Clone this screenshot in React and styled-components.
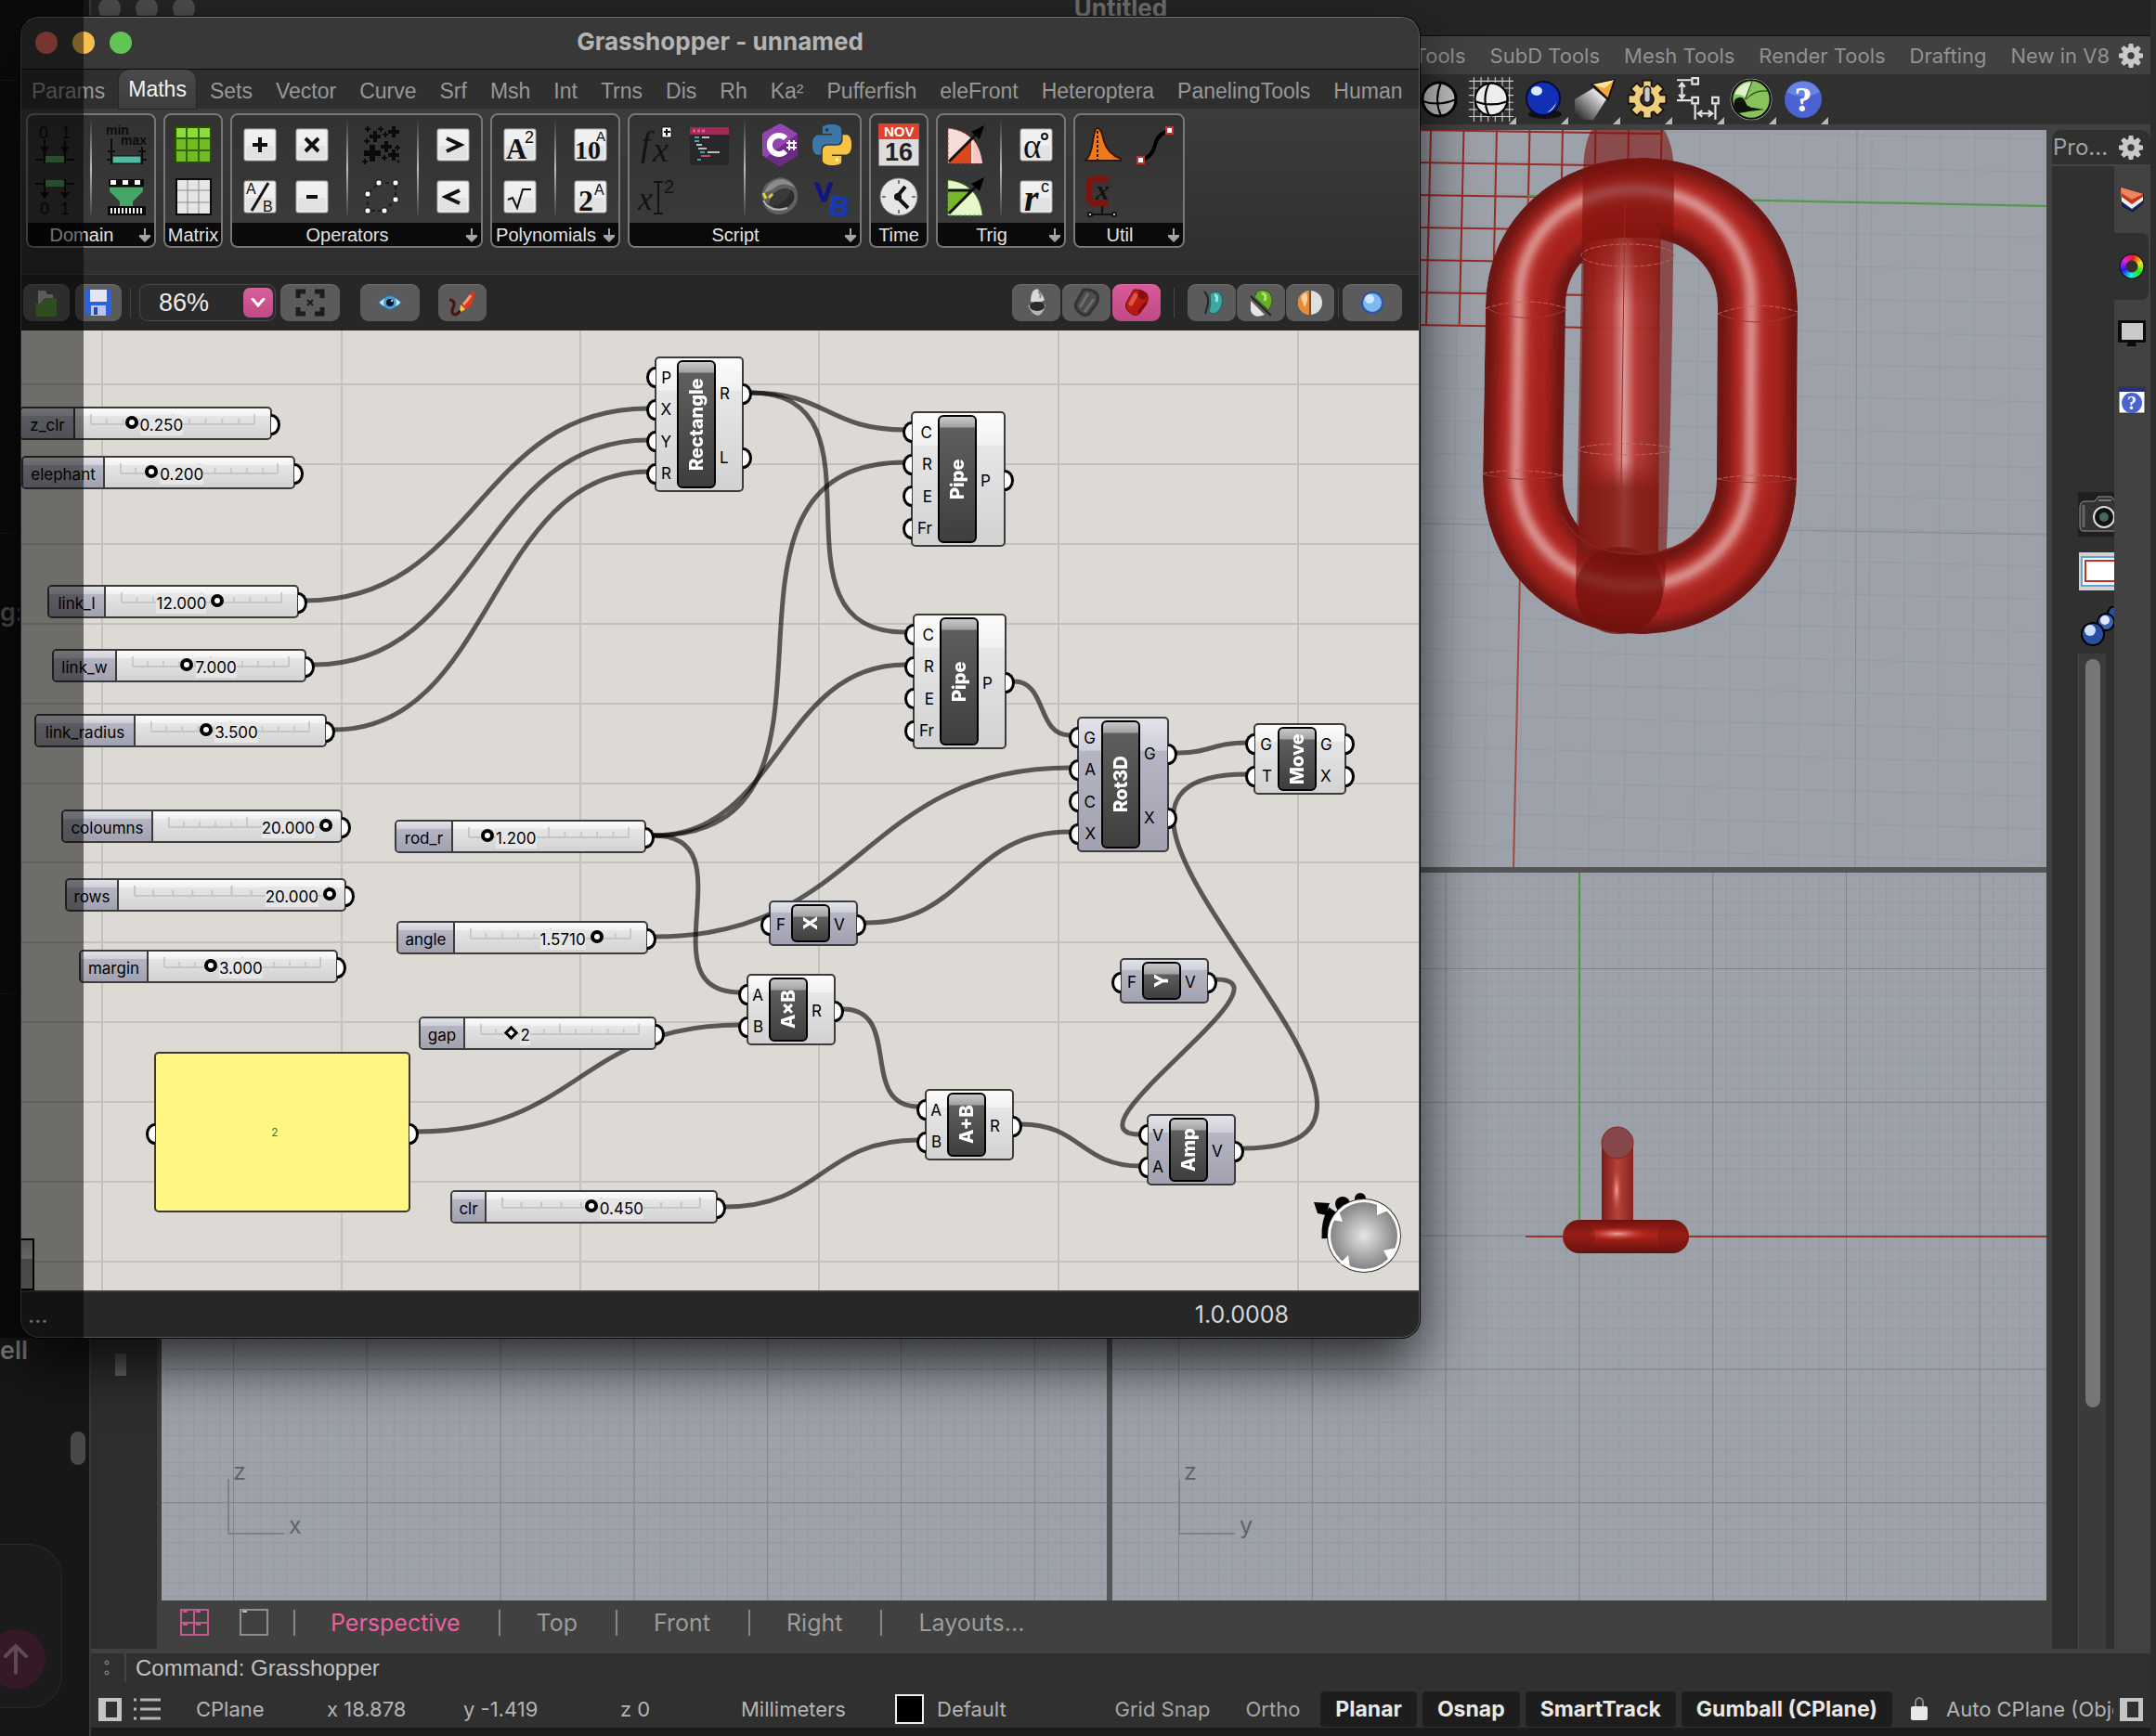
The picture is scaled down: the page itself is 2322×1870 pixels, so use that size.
import React from "react";
import styled, { createGlobalStyle, css } from "styled-components";

const UI = `Inter, "Noto Sans", sans-serif`;
const HELV = `"Liberation Sans", Arial, sans-serif`;

const GlobalStyle = createGlobalStyle`
  * { box-sizing: border-box; }
  body { margin: 0; background: #151515; font-family: ${UI}; overflow: hidden; }
  button, select, input { font: inherit; color: inherit; margin: 0; }
  button { padding: 0; border: none; background: none; }
  svg { display: block; }
`;

const Desktop = styled.div`
  position: relative;
  height: 100vh;
  overflow: hidden;
`;

/* ---------- chat window at the back ---------- */

const ChatWindow = styled.aside`
  position: absolute;
  inset: 0 auto 0 0;
  width: 98px;
  display: flex;
  flex-direction: column;
  background: #171717;
  border-right: 2px solid #3a3a3a;
  color: #7c7c7c;
  font-size: 27px;
  line-height: 32px;
`;

const ChatBlock = styled.div`
  height: ${(p) => p.$h}px;
  flex: none;
  padding-top: ${(p) => p.$pad || 0}px;
  border-bottom: 1px solid #2e2e2e;
  color: #9c9c9c;
  font-weight: 600;
`;

const ChatTail = styled.div`
  flex: 1;
  padding-top: 368px;
  display: flex;
  flex-direction: column;
  font-weight: 600;
`;

const ChatThumb = styled.div`
  width: 16px;
  height: 36px;
  margin: 71px 4px 85px auto;
  flex: none;
  border-radius: 8px;
  background: #484848;
`;

const ChatInput = styled.div`
  width: 67px;
  height: 177px;
  flex: none;
  display: flex;
  align-items: flex-end;
  padding-bottom: 20px;
  border: 1px solid #2a2a2a;
  border-left: none;
  border-radius: 0 36px 36px 0;
  background: #1b1b1b;
`;

const SendButton = styled.button`
  width: 64px;
  height: 64px;
  margin-left: -15px;
  flex: none;
  border-radius: 50%;
  background: #351926;
  display: grid;
  place-items: center;
`;

const Dimmer = styled.div`
  position: absolute;
  left: 0;
  top: 0;
  width: 90px;
  height: 1441px;
  background: rgba(0, 0, 0, 0.5);
  pointer-events: none;
`;

/* ---------- Rhino window ---------- */

const RhinoWindow = styled.main`
  position: absolute;
  inset: 0 0 0 98px;
  display: flex;
  flex-direction: column;
  background: #414141;
  border-right: 6px solid #2d2d2d;
  color: #b9b9b9;
`;

const RhinoTitle = styled.header`
  height: 39px;
  flex: none;
  position: relative;
  display: flex;
  justify-content: center;
  background: #252525;
  border-bottom: 1px solid #0c0c0c;
  color: #6e6e6e;
  font-size: 26px;
  font-weight: 700;
  line-height: 18px;
`;

const Lights = styled.div`
  position: absolute;
  left: ${(p) => p.$x}px;
  top: ${(p) => p.$y}px;
  display: flex;
  gap: 16px;
`;

const Light = styled.button`
  width: 24px;
  height: 24px;
  border-radius: 50%;
  background: ${(p) => p.$color};
`;

const RhinoMenu = styled.nav`
  height: 41px;
  flex: none;
  display: flex;
  justify-content: flex-end;
  align-items: center;
  gap: 26px;
  padding-right: 8px;
  color: #919191;
  font-size: 22px;
`;

const GearButton = styled.button`
  width: 26px;
  height: 26px;
  margin-left: -16px;
`;

const RhinoTools = styled.div`
  height: 54px;
  flex: none;
  display: flex;
  justify-content: flex-end;
  padding-right: 346px;
  background: #303030;
`;

const ToolButton = styled.button`
  position: relative;
  width: 56px;
  height: 54px;
  display: grid;
  place-items: center;

  &::after {
    content: "";
    position: absolute;
    right: 1px;
    bottom: 0;
    border: 4px solid transparent;
    border-right-color: #b8b8b8;
    border-bottom-color: #b8b8b8;
    display: ${(p) => (p.$menu ? "block" : "none")};
  }
`;

const RhinoBody = styled.div`
  flex: 1;
  min-height: 0;
  display: flex;
`;

const LeftColumn = styled.div`
  width: 71px;
  flex: none;
  margin-bottom: 5px;
  padding: 1324px 0 0 26px;
  background: #2e2e2e;
`;

const LeftHandle = styled.div`
  width: 12px;
  height: 24px;
  background: linear-gradient(#4a4a4a, #6a6a6a);
`;

const Center = styled.section`
  flex: 1;
  min-width: 0;
  display: flex;
  flex-direction: column;
  padding: 6px 6px 0 5px;
`;

const Viewports = styled.div`
  flex: 1;
  min-height: 0;
  display: grid;
  grid-template: 794fr 784fr / 1018fr 1006fr;
  gap: 6px;
  background: #555657;

  svg {
    width: 100%;
    height: 100%;
    background: #9da1a9;
    font-family: ${UI};
  }
`;

const ViewTabs = styled.nav`
  height: 57px;
  flex: none;
  display: flex;
  align-items: center;
  padding: 0 0 10px 20px;
  font-size: 25px;
`;

const LayoutButton = styled.button`
  width: 31px;
  height: 30px;
  margin-right: 33px;

  & + & {
    margin-right: 27px;
  }
`;

const ViewTab = styled.button`
  height: 28px;
  padding: 0 41px 0 38px;
  border-left: 2px solid #858585;
  color: ${(p) => (p.$active ? "#e9619f" : "#9c9c9c")};
  line-height: 24px;

  & + & {
    padding-left: 39px;
  }
`;

const SidePanel = styled.aside`
  width: 106px;
  flex: none;
  margin: 6px 0 5px;
  display: flex;
  flex-direction: column;
`;

const SideHeader = styled.div`
  height: 39px;
  flex: none;
  display: flex;
  align-items: center;
  justify-content: space-between;
  padding: 0 8px 0 1px;
  border-bottom: 2px solid #454545;
  border-radius: 10px 10px 0 0;
  background: #303030;
  color: #a2a2a2;
  font-size: 24px;
`;

const SideBody = styled.div`
  flex: 1;
  min-height: 0;
  display: flex;
`;

const SideIcons = styled.div`
  width: 67px;
  flex: none;
  display: flex;
  flex-direction: column;
  gap: 17px;
  padding: 351px 0 0 28px;
  overflow: hidden;
  background: #303030;
`;

const SideTrack = styled.div`
  width: 30px;
  flex: 1;
  margin-top: -10px;
  padding: 6px 7px;
  background: #3b3b3b;
  border-left: 1px solid #484848;
`;

const SideThumb = styled.div`
  width: 16px;
  height: 76%;
  border-radius: 8px;
  background: #767676;
`;

const Rail = styled.div`
  flex: 1;
  background: #424242;
`;

const RailButton = styled.button`
  width: 37px;
  height: 72px;
  display: grid;
  place-items: center;
  border-radius: 0 8px 8px 0;
  background: ${(p) => (p.$dark ? "#303030" : "#424242")};
`;

const CommandBar = styled.div`
  height: 31px;
  flex: none;
  display: flex;
  align-items: center;
  gap: 10px;
  padding-left: 14px;
  background: #303030;
  color: #c2c2c2;
  font-family: ${HELV};
  font-size: 24px;
  line-height: 28px;
`;

const StatusBar = styled.footer`
  height: 58px;
  flex: none;
  display: flex;
  align-items: center;
  padding: 0 8px 0 8px;
  background: #303030;
  box-shadow: inset 0 -9px 0 #1c1c1c;
  color: #b4b4b4;
  font-size: 22px;
  white-space: nowrap;
`;

const StatusCell = styled.span`
  width: ${(p) => p.$w}px;
  flex: none;
`;

const Swatch = styled.span`
  width: 31px;
  height: 32px;
  flex: none;
  margin-right: 14px;
  border: 2px solid #eee;
  background: #000;
`;

const Toggle = styled.button`
  height: 38px;
  margin-right: 6px;
  padding: 0 16px;
  border-radius: 4px;
  background: ${(p) => (p.$on ? "#1d1d1d" : "none")};
  color: ${(p) => (p.$on ? "#e8e8e8" : "#a6a6a6")};
  font-size: ${(p) => (p.$on ? 23 : 22)}px;
  font-weight: ${(p) => (p.$on ? 700 : 400)};
`;

const Spacer = styled.span`
  flex: 1;
`;

const AutoCPlane = styled.span`
  width: 180px;
  flex: none;
  overflow: hidden;
  margin: 0 7px 0 20px;
`;

/* ---------- Grasshopper window ---------- */

const GhWindow = styled.section`
  position: absolute;
  left: 22px;
  top: 18px;
  width: 1507px;
  border: 1px solid #5c5c5c;
  border-top-color: #777;
  border-radius: 20px;
  overflow: hidden;
  background: #333;
  box-shadow: 0 0 0 1px #000, 0 28px 64px rgba(0, 0, 0, 0.75);
`;

const GhTitle = styled.header`
  position: relative;
  height: 56px;
  display: flex;
  align-items: center;
  justify-content: center;
  padding-bottom: 4px;
  border-bottom: 1px solid #0a0a0a;
  background: #383838;
  color: #b4b4b4;
  font-size: 26px;
  font-weight: 700;
`;

const GhTabs = styled.nav`
  height: 42px;
  display: flex;
  gap: 5px;
  padding-left: 1px;
  background: #2f2f2f;
  font-family: ${HELV};
`;

const GhTab = styled.button`
  height: 42px;
  padding: 0 10px;
  color: #989898;
  font-size: 23px;
  line-height: 46px;
  white-space: nowrap;

  ${(p) =>
    p.$active &&
    css`
      border-radius: 12px 12px 0 0;
      background: linear-gradient(#4a4a4a, #3c3c3c);
      box-shadow: 0 0 0 1px #262626;
      color: #f2f2f2;
      line-height: 38px;
    `}
`;

const Ribbon = styled.div`
  height: 179px;
  display: flex;
  align-items: flex-start;
  gap: 8px;
  padding: 5px 5px 0;
  border-bottom: 1px solid #3d3d3d;
  background: linear-gradient(#3c3c3c, #2e2e2e);
`;

const RibbonPanel = styled.section`
  height: 145px;
  display: flex;
  flex-direction: column;
  border: 2px solid #777;
  border-radius: 8px;
  overflow: hidden;
  background: linear-gradient(#323232, #3c3c3c);
`;

const RibbonIcons = styled.div`
  flex: 1;
  display: flex;
  padding: 4px 2px 0;
`;

const IconColumn = styled.div`
  width: 56px;

  & + &[data-split="true"] {
    margin-left: 20px;
    position: relative;
  }

  & + &[data-split="true"]::before {
    content: "";
    position: absolute;
    left: -11px;
    top: 0;
    width: 2px;
    height: 108px;
    background: linear-gradient(transparent, #bbb 50%, transparent);
  }
`;

const RibbonButton = styled.button`
  width: 56px;
  height: 56px;
  display: grid;
  place-items: center;
`;

const RibbonLabel = styled.div`
  height: 26px;
  display: flex;
  align-items: center;
  justify-content: center;
  background: #0a0a0a;
  color: #e2e2e2;
  font-family: ${HELV};
  font-size: 20px;
  line-height: 24px;
`;

const RibbonCaption = styled.span`
  flex: 1;
  text-align: center;
`;

const GhToolbar = styled.div`
  height: 60px;
  display: flex;
  align-items: center;
  padding: 0 18px 0 2px;
  background: #272727;
`;

const BarButton = styled.button`
  width: ${(p) => p.$w || 52}px;
  height: 40px;
  flex: none;
  display: grid;
  place-items: center;
  margin-right: ${(p) => p.$gap ?? 2}px;
  border-radius: 9px;
  background: ${(p) => (p.$active ? "linear-gradient(#da5a99, #c04a84)" : "#5b5b5b")};
  box-shadow: inset 0 1px 0 rgba(255, 255, 255, 0.12);
`;

const BarSplit = styled.span`
  width: 1px;
  height: 32px;
  margin: 0 ${(p) => p.$r}px 0 ${(p) => p.$l}px;
  background: #444;
`;

const ZoomBox = styled.div`
  position: relative;
  width: 147px;
  height: 40px;
  margin-right: 5px;
  border: 1px solid #484848;
  border-radius: 9px;
  background: #2b2b2b;
`;

const ZoomSelect = styled.select`
  width: 100%;
  height: 100%;
  padding-left: 20px;
  border: none;
  appearance: none;
  background: transparent;
  color: #ececec;
  font-family: ${HELV};
  font-size: 27px;
`;

const ZoomArrow = styled.span`
  position: absolute;
  right: 2px;
  top: 3px;
  width: 32px;
  height: 32px;
  display: grid;
  place-items: center;
  border-radius: 7px;
  background: linear-gradient(#d5609a, #bf4a84);
  pointer-events: none;
`;

const Canvas = styled.div`
  position: relative;
  height: 1034px;
  overflow: hidden;
  background: #dddad5;
  color: #000;

  > svg {
    position: absolute;
    inset: 0;
  }
`;

const GhStatus = styled.footer`
  height: 50px;
  display: flex;
  align-items: center;
  justify-content: space-between;
  padding: 0 140px 0 7px;
  border-top: 2px solid #3c3c3c;
  background: #272727;
  color: #d5d5d5;
  font-size: 25px;
  line-height: 30px;
`;

const portShape = css`
  content: "";
  position: absolute;
  top: 50%;
  width: 7px;
  height: 17px;
  margin-top: -10px;
  border: 3px solid #000;
  background: #fff;
`;

const portIn = css`
  ${portShape}
  right: calc(100% + 1px);
  border-right: none;
  border-radius: 100% 0 0 100% / 50% 0 0 50%;
`;

const portOut = css`
  ${portShape}
  left: calc(100% + 1px);
  border-left: none;
  border-radius: 0 100% 100% 0 / 0 50% 50% 0;
`;

const lightFill = "linear-gradient(#fcfcfc, #f1f1f1 24%, #e6e6e6 25%, #d2d2d2)";
const greyFill = "linear-gradient(#e3e3ea, #cfcfda 24%, #b5b5c3 25%, #a1a1b0)";

const SliderBox = styled.div`
  position: absolute;
  left: ${(p) => p.$x}px;
  top: ${(p) => p.$y}px;
  width: ${(p) => p.$w}px;
  height: 36px;
  display: flex;
  border: 2px solid #3c3c3c;
  border-radius: 5px;
  background: ${lightFill};
  font-size: 17px;

  &::after {
    ${portOut}
  }
`;

const SliderLabel = styled.label`
  width: ${(p) => p.$w}px;
  flex: none;
  padding-top: 3px;
  border-right: 2px solid #3c3c3c;
  border-radius: 3px 0 0 3px;
  background: ${greyFill};
  text-align: center;
  line-height: 30px;
`;

const SliderTrack = styled.div`
  position: relative;
  flex: 1;
  margin: 0 16px;

  svg {
    position: absolute;
    left: 0;
    top: 6px;
    width: 100%;
    height: 12px;
  }
`;

const Range = styled.input`
  position: absolute;
  left: -7px;
  top: 8px;
  width: calc(100% + 14px);
  height: 14px;
  appearance: none;
  background: transparent;

  &::-webkit-slider-thumb {
    appearance: none;
    width: 14px;
    height: 14px;
    border: 4px solid #000;
    border-radius: 50%;
    background: #fff;
    ${(p) =>
      p.$diamond &&
      css`
        width: 11px;
        height: 11px;
        border-width: 3px;
        border-radius: 0;
        transform: rotate(45deg);
      `}
  }
`;

const SliderValue = styled.output`
  position: absolute;
  top: 7px;
  line-height: 22px;
  background: #e6e6e6;
`;

const NodeBox = styled.div`
  position: absolute;
  left: ${(p) => p.$x}px;
  top: ${(p) => p.$y}px;
  width: ${(p) => p.$w}px;
  height: ${(p) => p.$h}px;
  display: grid;
  grid-template-columns: ${(p) => p.$in}px 42px 1fr;
  padding: 2px 0;
  border: 2px solid #3c3c3c;
  border-radius: 5px;
  background: ${(p) => (p.$grey ? greyFill : lightFill)};
  font-size: 17px;
`;

const PortColumn = styled.div`
  display: flex;
  flex-direction: column;
`;

const Port = styled.span`
  position: relative;
  flex: 1;
  display: flex;
  align-items: center;
  padding-top: 3px;
  justify-content: ${(p) => (p.$out ? "flex-start" : "flex-end")};
  padding-right: ${(p) => (p.$out ? 0 : 6)}px;
  padding-left: ${(p) => (p.$out ? 4 : 0)}px;

  &::before {
    ${(p) => (p.$out ? portOut : portIn)}
  }
`;

const Capsule = styled.div`
  display: flex;
  align-items: center;
  justify-content: center;
  border: 2px solid #000;
  border-radius: 6px;
  background: linear-gradient(to top, #c9c9c9, #a2a2a2 11px, #5e5e5e 12px, #3e3e3e);
  color: #fff;
  font-size: 20px;
  font-weight: 800;
  writing-mode: vertical-rl;
  text-orientation: sideways;
  transform: rotate(180deg);
`;

const NotePanel = styled.div`
  position: absolute;
  left: 143px;
  top: 777px;
  width: 276px;
  height: 173px;
  display: grid;
  place-items: center;
  padding-right: 16px;
  border: 2px solid #3c3c26;
  border-radius: 5px;
  background: #fff782;
  color: #3f7a22;
  font-size: 12px;

  &::before {
    ${portIn}
  }
  &::after {
    ${portOut}
  }
`;

const Stub = styled.div`
  position: absolute;
  left: -4px;
  top: 978px;
  width: 18px;
  height: 56px;
  border: 2px solid #000;
  background: linear-gradient(#aaa, #ccc 38%, #8d8d8d 39%, #999);
`;

/* ---------- icons ---------- */

const Gear = ({ size = 26, color = "#c9c9c9" }) => (
  <svg width={size} height={size} viewBox="-12 -12 24 24">
    <g fill={color}>
      {[0, 45, 90, 135].map((a) => (
        <path key={a} d="M-2-12H2L3-7V7L2 12H-2L-3 7V-7Z" transform={`rotate(${a})`} />
      ))}
      <circle r="8.6" />
    </g>
    <circle r="3.4" fill="#3c3c3c" />
  </svg>
);

const Svg = ({ children, size = 44 }) => (
  <svg width={size} height={size} viewBox="0 0 44 44">
    {children}
  </svg>
);

const Tile = ({ children }) => (
  <Svg>
    <rect x="5" y="5" width="34" height="34" rx="2" fill="#f0f0f0" stroke="#aaa" />
    <rect x="7" y="23" width="30" height="14" fill="#e2e2e2" />
    {children}
  </Svg>
);

const stroke = (d, w = 4, c = "#111") => <path d={d} fill="none" stroke={c} strokeWidth={w} />;

const T = (x, y, s, text, extra = {}) => (
  <text x={x} y={y} fontSize={s} fill="#111" fontFamily="Liberation Serif, serif" fontWeight="700" {...extra}>
    {text}
  </text>
);

const sans = { fontFamily: "Liberation Sans, sans-serif", fontWeight: 400 };
const digits = { ...sans, fill: "#0c0c0c", fontSize: 18 };

const pythonHalf =
  "M14.25.18l.9.2.73.26.59.3.45.32.34.34.25.34.16.33.1.3.04.26.02.2-.01.13V8.5l-.05.63-.13.55-.21.46-.26.38-.3.31-.33.25-.35.19-.35.14-.33.1-.3.07-.26.04-.21.02H8.77l-.69.05-.59.14-.5.22-.41.27-.33.32-.27.35-.2.36-.15.37-.1.35-.07.32-.04.27-.02.21v3.06H3.17l-.21-.03-.28-.07-.32-.12-.35-.18-.36-.26-.36-.36-.35-.46-.32-.59-.28-.73-.21-.88-.14-1.05-.05-1.23.06-1.22.16-1.04.24-.87.32-.71.36-.57.4-.44.42-.33.42-.24.4-.16.36-.1.32-.05.24-.01h.16l.06.01h8.16v-.83H6.18l-.01-2.75-.02-.37.05-.34.11-.31.17-.28.25-.26.31-.23.38-.2.44-.18.51-.15.58-.12.64-.1.71-.06.77-.04.84-.02 1.27.05z";

// x, y, arm length, thickness
const crosses = [
  [6, 5, 3, 2], [20, 5, 3, 2], [34, 8, 6, 4], [14, 13, 6, 4], [25, 11, 3, 2], [5, 18, 3, 2],
  [26, 24, 6, 4], [38, 25, 3, 2], [11, 31, 9, 6], [34, 33, 6, 4], [24, 36, 3, 2], [39, 40, 2, 1], [3, 40, 3, 2],
];

const icons = {
  domain: (
    <Svg>
      <text x="4" y="15" {...digits}>0</text>
      <text x="28" y="15" {...digits}>1</text>
      <rect x="11" y="34" width="20" height="7" fill="#4f9a58" />
      {stroke("M10 17V42M32 17V42M0 38H10M32 38H42", 2, "#0c0c0c")}
      <path d="M5 24h10l-5 7zM27 24h10l-5 7z" fill="#0c0c0c" />
    </Svg>
  ),
  domain2: (
    <Svg>
      <rect x="11" y="4" width="20" height="7" fill="#4f9a58" />
      {stroke("M10 3V20M32 3V20M0 8H10M32 8H42", 2, "#0c0c0c")}
      <path d="M5 17h10l-5 7zM27 17h10l-5 7z" fill="#0c0c0c" />
      <text x="5" y="41" {...digits}>0</text>
      <text x="27" y="41" {...digits}>1</text>
    </Svg>
  ),
  minmax: (
    <Svg>
      <text x="0" y="11" {...digits} fontSize="14" fontWeight="700">min</text>
      <text x="16" y="22" {...digits} fontSize="14" fontWeight="700">max</text>
      <rect x="7" y="34" width="31" height="8" fill="#52b9a2" stroke="#0c0c0c" />
      {stroke("M6 15V43M39 24V43M1 38H6M39 38H44M2 29H10M35 29H43", 2, "#0c0c0c")}
    </Svg>
  ),
  funnel: (
    <Svg>
      <rect x="3" y="3" width="38" height="8" fill="#0a0a0a" />
      <path d="M5 4h6v5H5zM18 4h6v5h-6zM31 4h6v5h-6z" fill="#fff" />
      <path d="M4 12v4l11 11v5h14v-5l11-11v-4z" fill="#46a566" />
      <rect x="2" y="32" width="41" height="10" fill="#0a0a0a" />
      <path d="M5 37h36" stroke="#eee" strokeWidth="6" strokeDasharray="2 2" />
    </Svg>
  ),
  greenGrid: (
    <Svg>
      <rect x="3" y="3" width="38" height="38" fill="#72bd1e" stroke="#274d05" strokeWidth="2" />
      <rect x="4" y="4" width="36" height="12" fill="#8fd93a" />
      {stroke("M15 3V41M28 3V41M3 15H41M3 28H41", 2, "#35660a")}
    </Svg>
  ),
  whiteGrid: (
    <Svg>
      <rect x="4" y="3" width="37" height="38" fill="#e6e6e6" stroke="#0a0a0a" strokeWidth="2" />
      {stroke("M16 4V40M28 4V40M5 15H40M5 28H40", 1, "#8a8a8a")}
    </Svg>
  ),
  plus: <Tile>{stroke("M22 14V30M14 22H30", 4)}</Tile>,
  times: <Tile>{stroke("M15 15L29 29M29 15L15 29", 4)}</Tile>,
  divide: (
    <Tile>
      {T(7, 19, 16, "A", sans)}
      {T(25, 38, 16, "B", sans)}
      {stroke("M13 37L31 7", 3)}
    </Tile>
  ),
  minus: <Tile>{stroke("M16 22H28", 4)}</Tile>,
  crosses: (
    <Svg>
      {crosses.map(([x, y, arm, w]) => (
        <path key={`${x}-${y}`} d={`M${x - arm} ${y}h${2 * arm}M${x} ${y - arm}v${2 * arm}`} stroke="#0b0b0b" strokeWidth={w} />
      ))}
    </Svg>
  ),
  dots: (
    <Svg>
      <path d="M18 7L36 7L36 25L24 37L6 37L6 19Z" fill="none" stroke="#1c1c1c" strokeWidth="2" strokeDasharray="4 3" />
      {[[18, 7], [36, 7], [6, 19], [36, 25], [6, 37], [24, 37]].map(([x, y]) => (
        <rect key={`${x}-${y}`} x={x - 3} y={y - 3} width="6" height="6" rx="2" fill="#fff" stroke="#111" />
      ))}
    </Svg>
  ),
  greater: <Tile>{stroke("M15 15L30 22L15 29", 4)}</Tile>,
  less: <Tile>{stroke("M29 15L14 22L29 29", 4)}</Tile>,
  square: <Tile>{T(7, 37, 31, "A")}{T(27, 20, 18, "2", sans)}</Tile>,
  root: <Tile>{stroke("M9 25L14 23L19 34L25 14H34", 2)}</Tile>,
  ten: <Tile>{T(5, 37, 28, "10")}{T(28, 18, 15, "A", sans)}</Tile>,
  two: <Tile>{T(9, 37, 32, "2")}{T(26, 20, 16, "A", sans)}</Tile>,
  fx: (
    <Svg>
      {T(4, 34, 38, "f", { fontStyle: "italic", fontWeight: 400, fill: "#131313" })}
      {T(17, 40, 38, "x", { fontStyle: "italic", fontWeight: 400, fill: "#131313" })}
      <rect x="27" y="3" width="10" height="11" fill="#fff" stroke="#111" />
      {stroke("M32 5v7M29 8h7", 2)}
    </Svg>
  ),
  xi: (
    <Svg>
      {T(1, 36, 36, "x", { fontStyle: "italic", fontWeight: 400, fill: "#131313" })}
      {stroke("M18 6h10M23 6V40M18 40h10", 2, "#131313")}
      {T(29, 18, 20, "2", { ...sans, fill: "#131313" })}
    </Svg>
  ),
  script: (
    <Svg>
      <rect x="1" y="3" width="42" height="41" rx="3" fill="#28282a" />
      <path d="M1 3h42v8H1z" fill="#a02a55" />
      <path d="M4 7h3M9 7h3M14 7h3" stroke="#e59" strokeWidth="3" />
      {stroke("M14 14h8M8 22h6M10 26h9M20 30h13", 2, "#bbb")}
      {stroke("M6 14h5M6 18h5M12 30h5M9 38h4", 2, "#48a0b8")}
      {stroke("M13 34h10", 2, "#c2497a")}
    </Svg>
  ),
  csharp: (
    <svg width="42" height="46" viewBox="0 0 42 46">
      <path d="M21 0Q23 0 40 11V34Q38 36 21 46Q19 46 2 34V11Q4 9 21 0Z" fill="#9246ae" />
      <path d="M40 11V34Q38 36 21 46Q19 46 6 37Z" fill="#6a2a86" />
      <path d="M27 16A10 10 0 1 0 27 30" fill="none" stroke="#fff" strokeWidth="6" />
      {stroke("M31 18V29M36 18V29M28 21H39M28 26H39", 2, "#fff")}
    </svg>
  ),
  python: (
    <svg width="42" height="44" viewBox="0 0 24 24" preserveAspectRatio="none">
      <path d={pythonHalf} fill="#3b78a9" />
      <path d={pythonHalf} fill="#f5c445" transform="rotate(180 12 12)" />
      <circle cx="8.9" cy="3.2" r="1" fill="#333" />
      <circle cx="15.1" cy="20.8" r="1" fill="#fff3c0" />
    </svg>
  ),
  snake: (
    <Svg>
      <path d="M22 1A20 20 0 1 1 8 36L4 30L18 33Q36 30 35 20Q34 10 22 14Q12 18 10 30L3 24Q0 6 22 1Z" fill="#5f5f5f" />
      <path d="M5 18Q10 4 24 3Q34 5 38 12Q24 4 14 14Z" fill="#8c8c8c" />
      <path d="M34 14Q42 22 32 32Q22 38 12 32Q30 30 34 14Z" fill="#2c2c2c" />
      <path d="M4 26Q12 40 30 34" fill="none" stroke="#b5b5b5" strokeWidth="2" />
      <path d="M4 18l3 6M14 19l-4 4" stroke="#e0d03a" strokeWidth="3" />
    </Svg>
  ),
  vb: (
    <Svg>
      {T(3, 27, 30, "V", { ...sans, fontWeight: 700, fill: "#10187c", stroke: "#10187c" })}
      {T(19, 42, 30, "B", { ...sans, fontWeight: 700, fill: "#1838b4", stroke: "#1838b4", transform: "rotate(8 28 32)" })}
    </Svg>
  ),
  calendar: (
    <svg width="44" height="46" viewBox="0 0 44 46">
      <rect width="44" height="46" fill="#dcdcdc" stroke="#333" />
      <rect width="44" height="17" fill="#e0402c" />
      {T(6, 14, 15, "NOV", { ...sans, fontWeight: 700, fill: "#fff" })}
      {T(7, 40, 27, "16", { ...sans, fontWeight: 700, fill: "#222" })}
    </svg>
  ),
  clock: (
    <Svg>
      <circle cx="22" cy="22" r="20" fill="#e6e6e6" stroke="#888" />
      {stroke("M22 4v4M22 36v4M4 22h4M36 22h4", 2, "#777")}
      {stroke("M29 11L20 22L32 34", 4)}
      <circle cx="21" cy="22" r="4" fill="#111" />
    </Svg>
  ),
  trigRed: (
    <Svg>
      <path d="M3 4Q36 8 40 42L3 42Z" fill="#f7dcd8" stroke="#b33" strokeDasharray="3 2" />
      <path d="M28 14V42H3Z" fill="#d8481c" />
      <path d="M30 16Q38 26 40 42L30 42Z" fill="#f5c8c4" />
      {stroke("M4 40L36 8", 3)}
      <path d="M42 1L37 16L28 8Z" />
    </Svg>
  ),
  trigGreen: (
    <Svg>
      <path d="M3 4Q36 8 40 42L3 42Z" fill="#e6f8c8" stroke="#5a2" strokeDasharray="3 2" />
      <path d="M3 15H28L3 41Z" fill="#74b82a" />
      {stroke("M4 40L36 8M3 15H28", 3)}
      <path d="M42 1L37 16L28 8Z" />
    </Svg>
  ),
  alpha: <Tile>{T(8, 36, 37, "α", { fontWeight: 400 })}<circle cx="31" cy="13" r="3" fill="none" stroke="#111" strokeWidth="2" /></Tile>,
  rad: <Tile>{T(9, 37, 40, "r", { fontStyle: "italic" })}{T(27, 17, 18, "c", sans)}</Tile>,
  bell: (
    <Svg>
      <path d="M3 39Q9 34 11 18Q13 4 16 4Q20 4 23 18Q27 32 41 37V39Z" fill="#ee7a1e" stroke="#3a1502" strokeWidth="2" />
      <path d="M16 7V38" stroke="#3a1200" strokeWidth="2" strokeDasharray="3 2" />
    </Svg>
  ),
  polyline: (
    <Svg>
      <path d="M8 38Q19 35 22 22T38 7" fill="none" stroke="#000" strokeWidth="4" />
      <rect x="3" y="35" width="7" height="7" fill="#fff" stroke="#b33" strokeWidth="2" />
      <rect x="34" y="3" width="7" height="7" fill="#fff" stroke="#b33" strokeWidth="2" />
    </Svg>
  ),
  util: (
    <Svg>
      {stroke("M28 3H13Q7 3 7 9V22Q7 29 13 29H28", 7, "#7c1410")}
      {T(14, 25, 29, "x", { fontStyle: "italic" })}
      {stroke("M8 41H34M21 32V41", 2)}
      <circle cx="8" cy="41" r="2" fill="#fff" stroke="#111" strokeWidth="2" />
      <circle cx="34" cy="41" r="2" fill="#fff" stroke="#111" strokeWidth="2" />
    </Svg>
  ),
};

const barrel = "M14 3Q22 2 28 7Q31 12 28 18L20 29Q15 33 9 27Q4 23 6 17Z";

const barIcons = {
  folder: (
    <svg width="30" height="34" viewBox="0 0 30 34">
      <path d="M6 4h8l2 4h6v12H6z" fill="#b9b9b9" />
      <path d="M3 18h5l5-6h13v19q-1 1-3 1H4z" fill="#5f9a3e" />
    </svg>
  ),
  save: (
    <svg width="32" height="32" viewBox="0 0 32 32">
      <path d="M2 2h28v28H5l-3-3z" fill="#2d62dd" />
      <rect x="7" y="2" width="18" height="13" fill="#e2e6f2" />
      <rect x="8" y="19" width="16" height="11" fill="#b8c6ee" />
      <rect x="11" y="21" width="4" height="8" fill="#2448a8" />
    </svg>
  ),
  fit: (
    <svg width="32" height="30" viewBox="0 0 32 30">
      <path d="M3 10V3H11M21 3H29V10M29 20V27H21M11 27H3V20" fill="none" stroke="#1c1c1c" strokeWidth="5" />
      <path d="M13 12l6 6M19 12l-6 6" stroke="#1c1c1c" strokeWidth="2" />
    </svg>
  ),
  eye: (
    <svg width="28" height="22" viewBox="0 0 28 22">
      <path d="M1 11Q14-3 27 11Q14 24 1 11Z" fill="#cfe8f6" stroke="#3a6a8c" strokeWidth="2" />
      <circle cx="14" cy="11" r="7" fill="#4c9fd4" />
      <circle cx="14" cy="11" r="4" fill="#0b1a28" />
      <circle cx="16" cy="9" r="1" fill="#fff" />
    </svg>
  ),
  pen: (
    <svg width="32" height="30" viewBox="0 0 32 30">
      <path d="M28 2Q31 9 24 20L15 25Q13 16 28 2Z" fill="#dc3a20" />
      <path d="M25 7Q22 12 17 17" stroke="#f59a7a" strokeWidth="3" fill="none" />
      <path d="M14 17l5 5-6 4z" fill="#f2cc4a" />
      <path d="M2 12Q8 12 7 18Q2 28 9 28L14 24" fill="none" stroke="#4a140c" strokeWidth="3" />
    </svg>
  ),
  shade: (
    <svg width="32" height="34" viewBox="0 0 32 34">
      <path d="M17 2Q22 6 25 14Q20 18 10 16Q10 8 13 4Z" fill="#d8d8d8" />
      <path d="M18 5Q22 8 20 12" fill="none" stroke="#888" strokeWidth="2" />
      <path d="M7 20Q11 30 18 31Q24 29 26 19Z" fill="#b5b5b5" />
      <ellipse cx="17" cy="21" rx="8" ry="5" fill="#2a2a2a" />
    </svg>
  ),
  wire: (
    <svg width="34" height="34" viewBox="0 0 34 34">
      <path d={barrel} fill="#4c4c4c" stroke="#333" strokeWidth="3" />
      <path d="M10 22L19 7M15 27L25 13" stroke="#6e6e6e" strokeWidth="3" />
    </svg>
  ),
  solid: (
    <svg width="34" height="34" viewBox="0 0 34 34">
      <path d={barrel} fill="#b81a14" stroke="#7a0d0a" />
      <path d="M11 18L16 9" stroke="#dc5547" strokeWidth="5" strokeLinecap="round" />
      <ellipse cx="23" cy="9" rx="5" ry="4" fill="#8a0d0a" transform="rotate(40 23 9)" />
      <path d="M27 17L19 28" stroke="#7e0d0a" strokeWidth="3" />
    </svg>
  ),
  teal: (
    <svg width="34" height="34" viewBox="0 0 34 34">
      <path d="M9 5Q14 10 13 18L10 29" fill="none" stroke="#1c2a2a" strokeWidth="2" />
      <path d="M15 8Q21 3 26 7Q31 14 26 24Q20 32 14 27Q17 18 15 8Z" fill="#3ba8a4" stroke="#1c5f5c" />
      <path d="M20 9Q24 9 22 16" fill="none" stroke="#9ae6de" strokeWidth="3" />
    </svg>
  ),
  greenGem: (
    <svg width="34" height="34" viewBox="0 0 34 34">
      <path d="M6 15L21 30Q10 35 6 26Z" fill="#e6e6e6" />
      <path d="M13 5Q20 1 27 7Q32 16 25 25L10 11Z" fill="#69b02a" stroke="#2c5a0c" />
      <path d="M18 7Q24 8 21 15" fill="none" stroke="#b4e07a" strokeWidth="3" />
      <path d="M6 10L28 31" stroke="#1c2a10" strokeWidth="2" />
    </svg>
  ),
  halfBall: (
    <svg width="30" height="30" viewBox="0 0 30 30">
      <circle cx="15" cy="15" r="13" fill="#e0e0e0" />
      <path d="M15 2A13 13 0 0 0 15 28Z" fill="#e88a34" />
      <path d="M5 9A13 13 0 0 1 11 4Q14 12 9 20Z" fill="#f9cf9c" />
      <path d="M15 2V28" stroke="#8a4a18" strokeWidth="2" />
    </svg>
  ),
  blueBall: (
    <svg width="26" height="26" viewBox="0 0 26 26">
      <circle cx="13" cy="13" r="11" fill="#7db8f2" stroke="#2c55a8" strokeWidth="2" />
      <circle cx="10" cy="9" r="5" fill="#cfe6ff" />
    </svg>
  ),
};

const rhinoTools = [
  <Svg key="wire" size={44}>
    <circle cx="22" cy="22" r="18" fill="#c4c4c4" stroke="#000" strokeWidth="3" />
    <path d="M24 4Q16 22 24 40M4 24Q22 30 40 22" fill="none" stroke="#000" strokeWidth="2" />
  </Svg>,
  <Svg key="grid" size={48}>
    <path d="M5 0V44M12 0V44M19 0V44M26 0V44M33 0V44M40 0V44M0 4H44M0 11H44M0 18H44M0 25H44M0 32H44M0 39H44" stroke="#ccc" strokeWidth="1" />
    <circle cx="22" cy="22" r="16" fill="#ededed" stroke="#000" strokeWidth="2" />
    <path d="M20 6Q12 22 20 38M6 24Q22 30 38 24" fill="none" stroke="#000" strokeWidth="2" />
  </Svg>,
  <Svg key="ball">
    <ellipse cx="24" cy="38" rx="18" ry="5" fill="#111" />
    <circle cx="22" cy="21" r="18" fill="#1230b4" stroke="#050a38" strokeWidth="2" />
    <ellipse cx="15" cy="13" rx="6" ry="5" fill="#dbe6ff" />
    <path d="M26 36Q33 32 36 25Q34 34 26 36Z" fill="#fff" />
  </Svg>,
  <Svg key="spot">
    <defs>
      <linearGradient id="beam" x1="1" y1="0" x2="0" y2="1">
        <stop offset="0.2" stopColor="#e8e8e8" />
        <stop offset="0.9" stopColor="#e8e8e8" stopOpacity="0" />
      </linearGradient>
    </defs>
    <path d="M20 10L34 22L20 44L0 44L0 22Z" fill="url(#beam)" />
    <path d="M19 6L43 1L36 22Z" fill="#f2a53a" stroke="#111" strokeWidth="2" />
    <path d="M19 6L43 1L32 10Z" fill="#ffe39a" />
  </Svg>,
  <Svg key="gear">
    <g transform="translate(22 22) scale(1.75)">
      {[0, 45, 90, 135].map((a) => (
        <rect key={a} x="-2.6" y="-11.6" width="5.2" height="23.2" fill="#f0cf7c" stroke="#1a1208" transform={`rotate(${a})`} />
      ))}
      <circle r="8" fill="#f0cf7c" />
      <circle r="4" fill="#303030" stroke="#1a1208" />
      <rect x="-2" y="-8" width="4" height="10" rx="2" fill="#c9c9c9" stroke="#222" />
    </g>
  </Svg>,
  <Svg key="dim" size={48}>
    <path d="M0 3H14M0 23H14M5 7V20M2 10L5 6L8 10M2 17L5 21L8 17M18 27V42M38 27V42M22 36H34M25 33L21 36L25 39M31 33L35 36L31 39" fill="none" stroke="#e2e2e2" strokeWidth="2" />
    <path d="M15 1h6v6h-6zM15 20h6v6h-6zM35 20h6v6h-6z" fill="none" stroke="#e2e2e2" strokeWidth="2" />
  </Svg>,
  <Svg key="gh" size={48}>
    <circle cx="22" cy="22" r="20" fill="#86c45a" stroke="#d5d5d5" />
    <circle cx="22" cy="22" r="19" fill="none" stroke="#0b0b0b" strokeWidth="2" />
    <path d="M16 20Q22 10 22 5A17 17 0 0 0 6 17Q12 17 16 20Z" fill="#dff0cf" />
    <path d="M6 22Q12 18 15 22L18 28L22 30L35 32L20 34L8 36Q3 30 6 22Z" fill="#0d140a" />
    <path d="M16 22L23 4M17 22Q26 12 39 14" fill="none" stroke="#234a14" strokeWidth="1" />
  </Svg>,
  <Svg key="help">
    <circle cx="22" cy="22" r="20" fill="#4a62d2" />
    <path d="M4 14A20 20 0 0 1 40 14Q22 24 4 14Z" fill="#6a82e4" />
    <text x="22" y="35" textAnchor="middle" fontSize="38" fontWeight="700" fill="#fff" fontFamily="Liberation Serif, serif">
      ?
    </text>
  </Svg>,
];

const RhinoHelp = () => (
  <svg width="30" height="30" viewBox="0 0 30 30">
    <rect x="1" y="1" width="28" height="28" fill="#fff" stroke="#333" />
    <rect x="1" y="1" width="28" height="5" fill="#25307e" />
    <circle cx="15" cy="18" r="11" fill="#4a62d2" />
    <text x="15" y="25" textAnchor="middle" fontSize="20" fontWeight="700" fill="#fff" fontFamily="Liberation Serif, serif">
      ?
    </text>
  </svg>
);

/* ---------- data ---------- */

const tabs = [
  "Params", "Maths", "Sets", "Vector", "Curve", "Srf", "Msh", "Int", "Trns", "Dis", "Rh", "Ka²",
  "Pufferfish", "eleFront", "Heteroptera", "PanelingTools", "Human",
];

// a leading "|" puts a divider before the column
const ribbon = [
  ["Domain", true, [["domain", "domain2"], ["|", "minmax", "funnel"]]],
  ["Matrix", false, [["greenGrid", "whiteGrid"]]],
  ["Operators", true, [["plus", "divide"], ["times", "minus"], ["|", "crosses", "dots"], ["|", "greater", "less"]]],
  ["Polynomials", true, [["square", "root"], ["|", "ten", "two"]]],
  ["Script", true, [["fx", "xi"], ["script"], ["|", "csharp", "snake"], ["python", "vb"]]],
  ["Time", false, [["calendar", "clock"]]],
  ["Trig", true, [["trigRed", "trigGreen"], ["|", "alpha", "rad"]]],
  ["Util", true, [["bell", "util"], ["polyline"]]],
];

const sliders = [
  { name: "z_clr", x: -2, y: 82, w: 272, lab: 58, value: 0.25, max: 1, text: "0.250" },
  { name: "elephant", x: 0, y: 135, w: 295, lab: 88, value: 0.2, max: 1, text: "0.200" },
  { name: "link_l", x: 28, y: 274, w: 271, lab: 61, value: 12, max: 20, text: "12.000" },
  { name: "link_w", x: 33, y: 343, w: 274, lab: 68, value: 7, max: 20, text: "7.000" },
  { name: "link_radius", x: 14, y: 413, w: 315, lab: 107, value: 3.5, max: 10, text: "3.500" },
  { name: "coloumns", x: 43, y: 516, w: 303, lab: 97, value: 20, max: 20, text: "20.000" },
  { name: "rows", x: 47, y: 590, w: 303, lab: 56, value: 20, max: 20, text: "20.000" },
  { name: "margin", x: 62, y: 667, w: 279, lab: 73, value: 3, max: 10, text: "3.000" },
  { name: "rod_r", x: 402, y: 527, w: 271, lab: 61, value: 1.2, max: 10, text: "1.200" },
  { name: "angle", x: 404, y: 636, w: 271, lab: 61, value: 1.571, max: 2, text: "1.5710" },
  { name: "gap", x: 428, y: 739, w: 256, lab: 48, value: 2, max: 10, text: "2", diamond: true },
  { name: "clr", x: 462, y: 926, w: 288, lab: 37, value: 0.45, max: 1, text: "0.450" },
];

const nodes = [
  { name: "Rectangle", x: 682, y: 28, w: 96, h: 146, inW: 22, ins: "P X Y R", outs: "R L" },
  { name: "Pipe", x: 958, y: 87, w: 102, h: 146, inW: 27, ins: "C R E Fr", outs: "P" },
  { name: "Pipe", x: 960, y: 305, w: 101, h: 146, inW: 27, ins: "C R E Fr", outs: "P" },
  { name: "Rot3D", x: 1137, y: 416, w: 99, h: 146, inW: 24, ins: "G A C X", outs: "G X", grey: true },
  { name: "Move", x: 1327, y: 423, w: 100, h: 77, inW: 24, ins: "G T", outs: "G X" },
  { name: "X", x: 805, y: 614, w: 96, h: 49, inW: 22, ins: "F", outs: "V", grey: true },
  { name: "Y", x: 1183, y: 676, w: 96, h: 49, inW: 22, ins: "F", outs: "V", grey: true },
  { name: "A×B", x: 781, y: 693, w: 96, h: 77, inW: 22, ins: "A B", outs: "R" },
  { name: "A+B", x: 973, y: 817, w: 96, h: 77, inW: 22, ins: "A B", outs: "R" },
  { name: "Amp", x: 1212, y: 844, w: 96, h: 77, inW: 22, ins: "V A", outs: "V", grey: true },
];

// x1, y1, x2, y2, optional handle length
const wires = [
  [306, 291, 675, 84], [315, 360, 675, 118], [337, 430, 675, 152],
  [785, 67, 952, 107], [785, 67, 952, 325],
  [681, 544, 952, 142], [681, 544, 952, 360], [681, 544, 774, 713],
  [1069, 378, 1129, 436], [683, 653, 1129, 471], [909, 638, 1129, 540],
  [1244, 455, 1320, 444], [1316, 881, 1320, 478, 274], [1287, 699, 1205, 866, 90],
  [426, 863, 774, 748], [885, 731, 966, 836], [1077, 855, 1205, 900], [758, 944, 966, 872],
];

const wirePath = ([x1, y1, x2, y2, handle]) => {
  const c = handle || Math.max(Math.abs(x2 - x1) / 2, Math.abs(y2 - y1) * 0.62);
  return `M${x1} ${y1}C${x1 + c} ${y1} ${x2 - c} ${y2} ${x2} ${y2}`;
};

/* ---------- pieces ---------- */

const NumberSlider = ({ name, x, y, w, lab, value, max, text, diamond }) => {
  const ratio = value / max;
  const place =
    ratio > 0.5
      ? { right: `calc(${(1 - ratio) * 100}% + 12px)` }
      : { left: `calc(${ratio * 100}% + 9px)` };
  return (
    <SliderBox $x={x} $y={y} $w={w}>
      <SliderLabel $w={lab} htmlFor={name}>{name}</SliderLabel>
      <SliderTrack>
        <svg viewBox="0 0 200 12" preserveAspectRatio="none">
          <path d="M1 0V11M100 0V11M199 0V11M1 11H199" stroke="#c6c6c6" strokeWidth="2" fill="none" />
          <path d="M20 5V11M40 5V11M60 5V11M80 5V11M120 5V11M140 5V11M160 5V11M180 5V11" stroke="#c6c6c6" strokeWidth="2" />
        </svg>
        <SliderValue htmlFor={name} style={place}>{text}</SliderValue>
        <Range id={name} type="range" min="0" max={max} step="any" defaultValue={value} $diamond={diamond} />
      </SliderTrack>
    </SliderBox>
  );
};

const Component = ({ name, x, y, w, h, inW, ins, outs, grey }) => (
  <NodeBox $x={x} $y={y} $w={w} $h={h} $in={inW} $grey={grey}>
    <PortColumn>
      {ins.split(" ").map((p) => <Port key={p}>{p}</Port>)}
    </PortColumn>
    <Capsule>{name}</Capsule>
    <PortColumn>
      {outs.split(" ").map((p) => <Port key={p} $out>{p}</Port>)}
    </PortColumn>
  </NodeBox>
);

const CanvasDrawing = () => (
  <svg width="1505" height="1034">
    <g stroke="#c3c1bb" strokeWidth="2">
      {[87, 345, 602, 859, 1117, 1375].map((x) => <path key={x} d={`M${x} 0V1034`} />)}
      {[58, 144, 230, 316, 402, 488, 573, 659, 745, 831, 917, 1003].map((y) => <path key={y} d={`M0 ${y}H1505`} />)}
    </g>
    <g fill="none" stroke="#000" strokeOpacity="0.6" strokeWidth="5">
      {wires.map((wire, i) => <path key={i} d={wirePath(wire)} />)}
    </g>
    <defs>
      <radialGradient id="compass">
        <stop offset="0" stopColor="#e6e6e6" />
        <stop offset="1" stopColor="#858585" />
      </radialGradient>
    </defs>
    <g transform="translate(1446 975)">
      <path d="M-54-36L-37-35L-41-22L-50-24Z" />
      <path d="M-41 3Q-42-16-34-28" fill="none" stroke="#000" strokeWidth="9" />
      <circle cx="-23" cy="-34" r="8" />
      <circle cx="-4" cy="-40" r="6" />
      <circle r="40" fill="#333" />
      <circle r="39" fill="#fff" />
      <circle r="36" fill="url(#compass)" />
      <path d="M-35-17L-23-15L-27-27ZM14-34L14-22L26-27ZM35 13L21 16L27 27ZM-26 30L-17 21L-15 35Z" fill="#fff" />
    </g>
  </svg>
);

const ring = "M1643 330C1643 262 1698 213 1768 213S1893 262 1893 330L1892 515C1892 587 1838 640 1766 640S1640 587 1640 515Z";

const range = (n) => [...Array(n).keys()];

const PerspectiveView = () => (
  <svg viewBox="1198 140 1006 794" preserveAspectRatio="xMidYMid slice">
    <defs>
      <linearGradient id="tube">
        <stop offset="0" stopColor="#701a17" />
        <stop offset="0.2" stopColor="#a3241e" />
        <stop offset="0.42" stopColor="#c0423c" />
        <stop offset="0.56" stopColor="#e3a09f" />
        <stop offset="0.7" stopColor="#bb3a34" />
        <stop offset="1" stopColor="#8a201b" />
      </linearGradient>
      <linearGradient id="tubeFade" x1="0" y1="0" x2="0" y2="1">
        <stop offset="0" stopColor="#8c1610" stopOpacity="0.9" />
        <stop offset="0.25" stopColor="#8c1610" stopOpacity="0" />
        <stop offset="0.72" stopColor="#8c1610" stopOpacity="0" />
        <stop offset="0.8" stopColor="#7d1a14" stopOpacity="0.75" />
      </linearGradient>
      <filter id="soft" x="-20%" y="-20%" width="140%" height="140%">
        <feGaussianBlur stdDeviation="6" />
      </filter>
      <filter id="glow" x="-20%" y="-20%" width="140%" height="140%">
        <feGaussianBlur stdDeviation="4" />
      </filter>
      <clipPath id="ringClip">
        <path d="M1600 330C1600 238 1676 170 1768 170S1936 238 1936 330L1935 515C1935 610 1862 683 1766 683S1597 610 1597 515Z" />
      </clipPath>
    </defs>
    <g stroke="#949ba1" strokeWidth="1">
      {range(24).map((i) => <path key={i} d={`M${1350 + i * 37} 140L${1335 + i * 37.6} 934`} />)}
      {range(25).map((i) => <path key={i} d={`M1198 ${130 + i * 35}L2204 ${150 + i * 35.4}`} />)}
    </g>
    <path d="M2000 140L1998 934M1198 558L2204 576" stroke="#858b92" strokeWidth="1" />
    <g stroke="#9a2a24" strokeWidth="2" fill="none">
      {range(8).map((i) => <path key={i} d={`M${1541 + i * 35.5} 140L${1536 + i * 35.7} ${349 + i * 0.5}`} />)}
      {range(7).map((i) => <path key={i} d={`M1520 ${140 + i * 35}L1788 ${144 + i * 35}`} />)}
    </g>
    <path d="M1646 211L1630 934" stroke="#a34743" strokeWidth="2" />
    <path d="M1646 211L2204 222" stroke="#4f9a46" strokeWidth="2" />
    <g fill="none" clipPath="url(#ringClip)">
      <path d={ring} stroke="#6b1714" strokeWidth="86" />
      <path d={ring} stroke="#a8241d" strokeWidth="60" filter="url(#soft)" />
      <path d={ring} stroke="#bb3a34" strokeWidth="24" filter="url(#soft)" transform="translate(-6 -7)" />
      <path d={ring} stroke="#e0a09f" strokeWidth="10" filter="url(#glow)" transform="translate(-7 -9)" />
    </g>
    <path
      d="M1714 140Q1705 156 1705 190L1697 636C1698 668 1718 683 1744 683C1770 683 1788 664 1793 630Q1800 500 1803 190Q1803 156 1792 140Z"
      fill="#7c130e"
      fillOpacity="0.6"
    />
    <path d="M1706 262Q1750 250 1788 262L1786 595Q1744 585 1700 595Z" fill="url(#tube)" fillOpacity="0.9" />
    <path d="M1706 245Q1750 235 1788 245L1786 597H1700Z" fill="url(#tubeFade)" />
    <circle cx="1744" cy="636" r="47" fill="#6e0f0b" fillOpacity="0.5" />
    <path d="M1682 555Q1700 596 1766 597Q1830 594 1846 540" fill="none" stroke="#8a201b" strokeWidth="2" />
    <path d="M1750 220L1745 588" stroke="#a12a24" strokeWidth="1" />
    <g fill="none" stroke="#c0655f" strokeWidth="1" strokeDasharray="5 2">
      <ellipse cx="1753" cy="275" rx="50" ry="12" />
      <ellipse cx="1750" cy="484" rx="50" ry="6" />
      <path d="M1600 332Q1644 318 1687 332M1850 338Q1893 322 1936 336M1597 510Q1640 503 1683 512M1849 516Q1892 508 1935 516" />
    </g>
    <g fill="none" stroke="#9a3a36" strokeWidth="1">
      <path d="M1600 332Q1644 352 1687 334M1850 338Q1893 356 1936 338M1597 511Q1640 521 1683 512M1849 516Q1892 524 1935 516" />
    </g>
  </svg>
);

const GridDefs = ({ id, x, y }) => (
  <defs>
    <pattern id={`${id}-fine`} x={x} y={y} width="14.38" height="14.38" patternUnits="userSpaceOnUse">
      <path d="M0 .5H15M.5 0V15" stroke="#949aa1" strokeWidth="1" />
    </pattern>
    <pattern id={`${id}-major`} x={x} y={y} width="143.8" height="143.8" patternUnits="userSpaceOnUse">
      <path d="M0 .5H144M.5 0V144" stroke="#80858a" strokeWidth="1" />
    </pattern>
  </defs>
);

const AxisMark = ({ x, y, label }) => (
  <g fill="#5f6368" fontSize="25">
    <path d={`M${x} ${y - 59}V${y}H${x + 60}`} fill="none" stroke="#7f8380" strokeWidth="2" />
    <text x={x + 5} y={y - 58}>z</text>
    <text x={x + 65} y={y}>{label}</text>
  </g>
);

const FrontView = () => (
  <svg viewBox="174 940 1018 784" preserveAspectRatio="xMidYMid slice">
    <GridDefs id="front" x="251" y="1043" />
    <rect x="174" y="940" width="1018" height="784" fill="url(#front-fine)" />
    <rect x="174" y="940" width="1018" height="784" fill="url(#front-major)" />
    <AxisMark x={246} y={1652} label="x" />
  </svg>
);

const RightView = () => (
  <svg viewBox="1198 940 1006 784" preserveAspectRatio="xMidYMid slice">
    <GridDefs id="right" x="1269" y="1043" />
    <defs>
      <linearGradient id="rod">
        <stop offset="0" stopColor="#7c1a17" />
        <stop offset="0.5" stopColor="#b5423c" />
        <stop offset="1" stopColor="#842420" />
      </linearGradient>
      <linearGradient id="base" x1="0" y1="0" x2="0" y2="1">
        <stop offset="0" stopColor="#6a120e" />
        <stop offset="0.45" stopColor="#b3241b" />
        <stop offset="1" stopColor="#5c100c" />
      </linearGradient>
      <radialGradient id="shine">
        <stop offset="0" stopColor="#f0a49c" />
        <stop offset="1" stopColor="#c03028" stopOpacity="0" />
      </radialGradient>
    </defs>
    <rect x="1198" y="940" width="1006" height="784" fill="url(#right-fine)" />
    <rect x="1198" y="940" width="1006" height="784" fill="url(#right-major)" />
    <path d="M1701 940V1332" stroke="#4c9a3f" strokeWidth="2" />
    <path d="M1643 1332H2204" stroke="#9c332d" strokeWidth="2" />
    <rect x="1725" y="1232" width="34" height="90" fill="url(#rod)" />
    <ellipse cx="1741" cy="1282" rx="6" ry="26" fill="url(#shine)" />
    <circle cx="1742" cy="1231" r="17" fill="#86474a" stroke="#8a2420" />
    <rect x="1683" y="1314" width="136" height="36" rx="18" fill="url(#base)" />
    <circle cx="1701" cy="1332" r="17" fill="#7a150f" fillOpacity="0.5" />
    <circle cx="1802" cy="1332" r="17" fill="#7a150f" fillOpacity="0.5" />
    <ellipse cx="1742" cy="1329" rx="34" ry="7" fill="url(#shine)" />
    <AxisMark x={1270} y={1652} label="y" />
  </svg>
);

const LayoutIcon = ({ split }) => (
  <svg width="31" height="30" viewBox="0 0 31 30">
    <rect x="1" y="1" width="29" height="27" fill="none" stroke={split ? "#c65a8e" : "#8e8e8e"} strokeWidth="2" />
    {split && <path d="M15 1V28M1 15H30M3 3h5M17 3h5M3 17h5M17 17h5" stroke="#c65a8e" strokeWidth="2" />}
    {!split && <path d="M3 3h5" stroke="#bbb" strokeWidth="2" />}
  </svg>
);

const PaneIcon = () => (
  <svg width="25" height="25" viewBox="0 0 25 25">
    <path fillRule="evenodd" d="M0 0H25V25H0ZM8 4V21H20V4Z" fill="#c4c4c4" />
  </svg>
);

const Rhino = () => (
  <RhinoWindow>
    <RhinoTitle>
      <Lights $x={8} $y={-3}>
        {["Close", "Minimise", "Zoom"].map((n) => <Light key={n} aria-label={n} $color="#4c4c4c" />)}
      </Lights>
      Untitled
    </RhinoTitle>
    <RhinoMenu>
      {["Tools", "SubD Tools", "Mesh Tools", "Render Tools", "Drafting", "New in V8"].map((m) => (
        <button key={m}>{m}</button>
      ))}
      <GearButton aria-label="Options"><Gear /></GearButton>
    </RhinoMenu>
    <RhinoTools>
      {rhinoTools.map((icon, i) => (
        <ToolButton key={icon.key} aria-label={icon.key} $menu={i > 0}>{icon}</ToolButton>
      ))}
    </RhinoTools>
    <RhinoBody>
      <LeftColumn><LeftHandle /></LeftColumn>
      <Center>
        <Viewports>
          <svg />
          <PerspectiveView />
          <FrontView />
          <RightView />
        </Viewports>
        <ViewTabs>
          <LayoutButton aria-label="Four views"><LayoutIcon split /></LayoutButton>
          <LayoutButton aria-label="Single view"><LayoutIcon /></LayoutButton>
          {["Perspective", "Top", "Front", "Right", "Layouts..."].map((v, i) => (
            <ViewTab key={v} $active={i === 0}>{v}</ViewTab>
          ))}
        </ViewTabs>
      </Center>
      <SidePanel>
        <SideHeader>
          Pro...
          <Gear />
        </SideHeader>
        <SideBody>
          <SideIcons>
            <svg width="50" height="48" viewBox="0 0 50 48">
              <rect width="50" height="48" fill="#1f1f1f" />
              <path d="M2 16Q2 10 8 10H18L22 5H36L40 10H50V42H6Q2 42 2 37Z" fill="#333" stroke="#999" />
              <circle cx="28" cy="27" r="11" fill="#111" stroke="#ddd" strokeWidth="2" />
              <circle cx="28" cy="27" r="5" fill="#47665c" />
              <path d="M6 14V38" stroke="#666" strokeWidth="3" />
              <path d="M22 9H36" stroke="#777" strokeWidth="2" />
            </svg>
            <svg width="50" height="41" viewBox="0 0 50 41">
              <rect x="1" width="49" height="41" fill="#d2d2d2" />
              <rect x="4" y="5" width="46" height="31" fill="#fff" stroke="#5aa8dc" strokeWidth="2" />
              <rect x="8" y="9" width="42" height="22" fill="#fff" stroke="#c33024" strokeWidth="2" />
            </svg>
            <svg width="50" height="44" viewBox="0 0 50 44">
              <circle cx="40" cy="8" r="8" fill="#2a4fa0" stroke="#000" strokeWidth="2" />
              <circle cx="30" cy="17" r="9" fill="#3c62b0" stroke="#000" strokeWidth="2" />
              <circle cx="16" cy="30" r="12" fill="#2a4fa0" stroke="#000" strokeWidth="2" />
              <circle cx="13" cy="26" r="6" fill="#cfe0ff" />
              <circle cx="29" cy="15" r="5" fill="#dfe9ff" />
            </svg>
            <SideTrack><SideThumb /></SideTrack>
          </SideIcons>
          <Rail>
            <RailButton aria-label="Layers">
              <svg width="28" height="30" viewBox="0 0 28 30">
                <path d="M2 2L26 9V19L15 28L4 22Z" fill="#1a2a6a" stroke="#111" />
                <path d="M2 2L26 9V16L14 25L3 17Z" fill="#f2f2f2" />
                <path d="M2 2L26 9V12L14 20L3 12Z" fill="#c8341c" />
                <path d="M2 2L26 9L14 15L3 8Z" fill="#f0845c" />
              </svg>
            </RailButton>
            <RailButton aria-label="Colors" $dark>
              <svg width="28" height="28" viewBox="-13 -13 26 26">
                {range(24).map((i) => (
                  <path key={i} d="M0-9A9 9 0 0 1 2.6-8.6" fill="none" stroke={`hsl(${i * 15} 85% 52%)`} strokeWidth="6" transform={`rotate(${i * 15})`} />
                ))}
                <circle r="12" fill="none" stroke="#111" />
              </svg>
            </RailButton>
            <RailButton aria-label="Display">
              <svg width="30" height="30" viewBox="0 0 30 30">
                <rect x="0" y="1" width="30" height="24" rx="1" fill="#0a0a0a" />
                <rect x="4" y="4" width="23" height="18" fill="#c9c9c9" />
                <path d="M11 25h8l1 4H9z" fill="#0a0a0a" />
              </svg>
            </RailButton>
            <RailButton aria-label="Help"><RhinoHelp /></RailButton>
          </Rail>
        </SideBody>
      </SidePanel>
    </RhinoBody>
    <CommandBar>
      <svg width="24" height="32" viewBox="0 0 24 32">
        <circle cx="3" cy="10" r="2" fill="none" stroke="#999" />
        <circle cx="3" cy="21" r="2" fill="none" stroke="#999" />
        <path d="M23 0V32" stroke="#444" strokeWidth="2" />
      </svg>
      Command: Grasshopper
    </CommandBar>
    <StatusBar>
      <StatusCell $w={38}><PaneIcon /></StatusCell>
      <StatusCell $w={67}>
        <svg width="29" height="26" viewBox="0 0 29 26">
          <path d="M0 3h3M7 3h22M0 13h3M7 13h22M0 23h3M7 23h22" stroke="#b4b4b4" strokeWidth="3" />
        </svg>
      </StatusCell>
      <StatusCell $w={141}>CPlane</StatusCell>
      <StatusCell $w={147}>x 18.878</StatusCell>
      <StatusCell $w={169}>y -1.419</StatusCell>
      <StatusCell $w={130}>z 0</StatusCell>
      <StatusCell $w={166}>Millimeters</StatusCell>
      <Swatch />
      Default
      <Spacer />
      <Toggle>Grid Snap</Toggle>
      <Toggle>Ortho</Toggle>
      <Toggle $on>Planar</Toggle>
      <Toggle $on>Osnap</Toggle>
      <Toggle $on>SmartTrack</Toggle>
      <Toggle $on>Gumball (CPlane)</Toggle>
      <svg width="32" height="28" viewBox="0 0 32 28">
        <path d="M19 12V7a4 5 0 0 1 8 0V12" fill="none" stroke="#8a8a8a" strokeWidth="2" />
        <rect x="14" y="11" width="18" height="15" rx="2" fill="#e8e8e8" />
      </svg>
      <AutoCPlane>Auto CPlane (Object)</AutoCPlane>
      <PaneIcon />
    </StatusBar>
  </RhinoWindow>
);

const Grasshopper = () => (
  <GhWindow>
    <GhTitle>
      <Lights $x={15} $y={15}>
        <Light aria-label="Close" $color="#ee6a5f" />
        <Light aria-label="Minimise" $color="#f5be4f" />
        <Light aria-label="Zoom" $color="#60c554" />
      </Lights>
      Grasshopper - unnamed
    </GhTitle>
    <GhTabs>
      {tabs.map((t) => <GhTab key={t} $active={t === "Maths"}>{t}</GhTab>)}
    </GhTabs>
    <Ribbon>
      {ribbon.map(([title, more, columns]) => (
        <RibbonPanel key={title}>
          <RibbonIcons>
            {columns.map((col) => (
              <IconColumn key={col.join()} data-split={col[0] === "|"}>
                {col.filter((n) => n !== "|").map((n) => (
                  <RibbonButton key={n} aria-label={n}>{icons[n]}</RibbonButton>
                ))}
              </IconColumn>
            ))}
          </RibbonIcons>
          <RibbonLabel>
            <RibbonCaption>{title}</RibbonCaption>
            {more && (
              <svg width="20" height="20" viewBox="0 0 20 20">
                <path d="M9 3h2v7h5v2l-6 6l-6-6v-2h5z" fill="#a5a5a5" />
              </svg>
            )}
          </RibbonLabel>
        </RibbonPanel>
      ))}
    </Ribbon>
    <GhToolbar>
      <BarButton $w={50} $gap={6} aria-label="Open">{barIcons.folder}</BarButton>
      <BarButton $w={50} $gap={0} aria-label="Save">{barIcons.save}</BarButton>
      <BarSplit $l={9} $r={9} />
      <ZoomBox>
        <ZoomSelect aria-label="Zoom" defaultValue="86%">
          <option>86%</option>
        </ZoomSelect>
        <ZoomArrow>
          <svg width="16" height="10" viewBox="0 0 16 10">
            <path d="M2 1L8 8L14 1" fill="none" stroke="#fff" strokeWidth="3" strokeLinecap="round" />
          </svg>
        </ZoomArrow>
      </ZoomBox>
      <BarButton $w={64} $gap={22} aria-label="Zoom extents">{barIcons.fit}</BarButton>
      <BarButton $w={64} $gap={20} aria-label="Named views">{barIcons.eye}</BarButton>
      <BarButton aria-label="Sketch">{barIcons.pen}</BarButton>
      <Spacer />
      <BarButton aria-label="No preview">{barIcons.shade}</BarButton>
      <BarButton aria-label="Wireframe">{barIcons.wire}</BarButton>
      <BarButton aria-label="Shaded" $active $gap={0}>{barIcons.solid}</BarButton>
      <BarSplit $l={14} $r={14} />
      <BarButton $gap={1} aria-label="Preview selected">{barIcons.teal}</BarButton>
      <BarButton $gap={1} aria-label="Document preview">{barIcons.greenGem}</BarButton>
      <BarButton $gap={0} aria-label="Mesh quality">{barIcons.halfBall}</BarButton>
      <BarSplit $l={4} $r={4} />
      <BarButton $w={64} $gap={0} aria-label="Preview settings">{barIcons.blueBall}</BarButton>
    </GhToolbar>
    <Canvas>
      <CanvasDrawing />
      <Stub />
      <NotePanel>2</NotePanel>
      {sliders.map((s) => <NumberSlider key={s.name} {...s} />)}
      {nodes.map((n, i) => <Component key={i} {...n} />)}
    </Canvas>
    <GhStatus>
      <span>…</span>
      <span>1.0.0008</span>
    </GhStatus>
  </GhWindow>
);

const App = () => {
  return (
    <Desktop>
      <GlobalStyle />
      <ChatWindow>
        <ChatBlock $h={87} />
        <ChatBlock $h={488} />
        <ChatBlock $h={496} $pad={69}>g:</ChatBlock>
        <ChatTail>
          ell
          <ChatThumb />
          <ChatInput>
            <SendButton aria-label="Send">
              <svg width="28" height="34" viewBox="0 0 28 34">
                <path d="M14 32V3M3 14L14 3L25 14" fill="none" stroke="#5d4a53" strokeWidth="4" strokeLinecap="round" />
              </svg>
            </SendButton>
          </ChatInput>
        </ChatTail>
      </ChatWindow>
      <Rhino />
      <Grasshopper />
      <Dimmer />
    </Desktop>
  );
};

export default App;
